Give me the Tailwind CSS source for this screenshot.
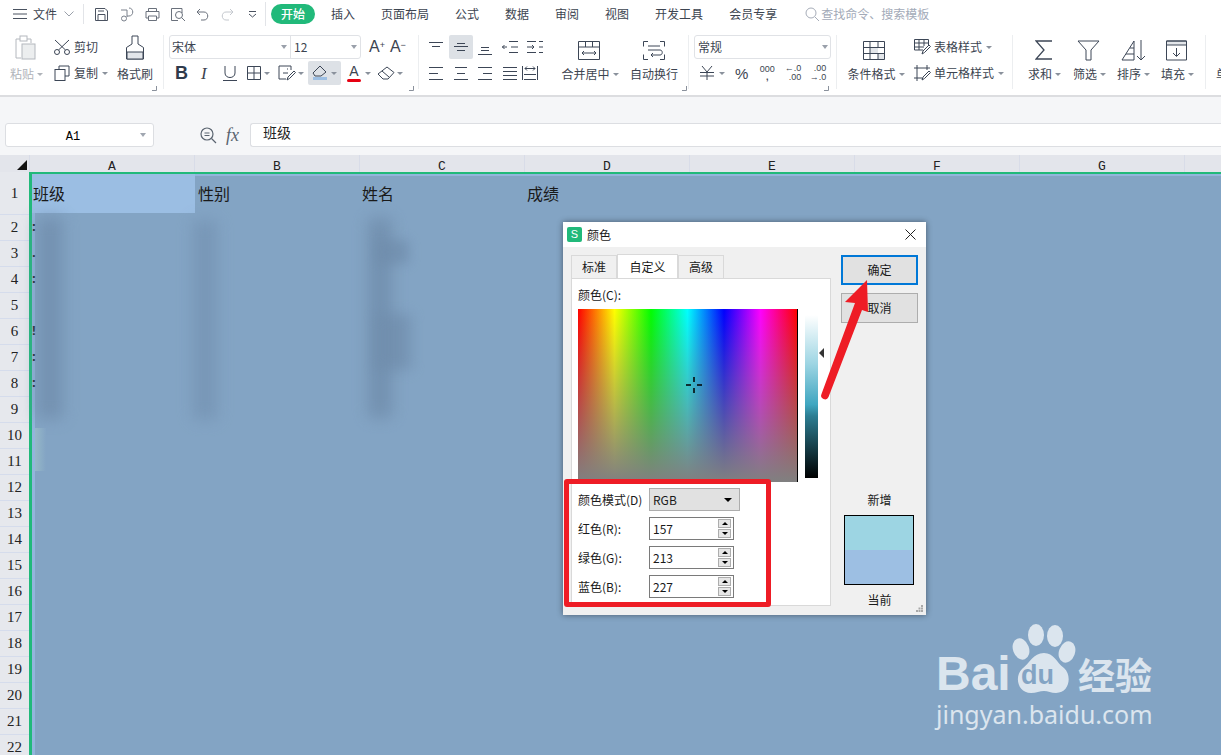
<!DOCTYPE html>
<html lang="zh">
<head>
  <meta charset="UTF-8">
  <title>WPS 表格 - 颜色</title>
  <script src="https://cdn.jsdelivr.net/npm/@tailwindcss/browser@4"></script>
</head>
<body class="bg-[#f5f6f8] font-['Noto_Sans_CJK_SC',sans-serif] text-xs text-[#3c4450]">
<div class="relative w-[1221px] h-[755px] overflow-hidden flex flex-col">

  <!-- tab row -->
  <div class="h-[28px] shrink-0 bg-white flex items-center">
    <svg class="ml-[13px]" width="14" height="12" fill="none" stroke="#4a5260"><path d="M0 1.5h14M0 6h14M0 10.500h14"/></svg>
    <span class="ml-[6px]">文件</span>
    <svg class="ml-[7px]" width="10" height="6" fill="none" stroke="#9aa0aa"><path d="M.5.5 5 5 9.500.5"/></svg>
    <div class="ml-[9px] w-px h-[20px] bg-[#e2e4e8]"></div>
    <svg class="ml-[10px]" width="15" height="15" fill="none" stroke="#4a5260"><path d="M1.500 1.500h9.500l2.500 2.500v9.500H1.500zM4 13.500v-6h7v6M4 4h6"/></svg>
    <svg class="ml-[11px]" width="15" height="15" fill="none" stroke="#7a818c"><path d="M1 3h6M9 1c5 0 5 8 0 8H7M7 3v7"/><circle cx="4" cy="11.500" r="2.500"/></svg>
    <svg class="ml-[10px]" width="15" height="15" fill="none" stroke="#6a717c"><path d="M3.500 4V1.500h8V4M3.500 11H1V4.500h13V11h-2.500M3.500 9h8v4.500h-8z"/></svg>
    <svg class="ml-[10px]" width="16" height="15" fill="none" stroke="#6a717c"><path d="M12 6V1.500H1.500v12H8"/><circle cx="9" cy="8" r="3.500"/><path d="m11.500 10.500 3.500 3.500"/></svg>
    <svg class="ml-[10px]" width="13" height="13" fill="none" stroke="#6a717c"><path d="M4 1 1 4l3 3M1 4h7c5 0 5 8 0 8H5"/></svg>
    <svg class="ml-[12px]" width="13" height="13" fill="none" stroke="#c4c8ce"><path d="m9 1 3 3-3 3M12 4H5c-5 0-5 8 0 8h3"/></svg>
    <svg class="ml-[14px]" width="9" height="9" fill="none" stroke="#4a5260"><path d="M1 1.500h7M1 4l3.500 3L8 4"/></svg>
    <div class="ml-[8px] w-px h-[24px] bg-[#e2e4e8]"></div>
    <div class="ml-[5px] w-[44px] h-[20px] rounded-full bg-[#21b97a] text-white flex items-center justify-center font-medium">开始</div>
    <div class="ml-[16px] flex gap-[26px]">
      <span>插入</span><span>页面布局</span><span>公式</span><span>数据</span><span>审阅</span><span>视图</span><span>开发工具</span><span>会员专享</span>
    </div>
    <svg class="ml-[28px]" width="14" height="14" fill="none" stroke="#a6acb8"><circle cx="6" cy="6" r="5"/><path d="m10 10 4 4"/></svg>
    <span class="ml-[2px] text-[#a3aab8]">查找命令、搜索模板</span>
  </div>

  <!-- ribbon -->
  <div class="h-[69px] shrink-0 bg-white border-b-2 border-[#dcdde0] flex pt-[7px] whitespace-nowrap overflow-hidden">

    <!-- clipboard -->
    <div class="relative w-[164px] shrink-0 h-[54px] flex border-r border-[#eceef0] pl-[10px] box-border">
      <div class="w-[36px] flex flex-col">
        <div class="h-[31px] pl-[5px]">
          <svg width="22" height="26" fill="none" stroke="#b4b8be"><path d="M5 4H1v19h5M12 4h4v4"/><rect x="5" y="1" width="7" height="5" fill="#fff"/><rect x="7" y="9" width="13" height="15" fill="#eceeef"/></svg>
        </div>
        <div class="h-4 flex items-center text-[#b0b4ba]">粘贴<i class="w-0 h-0 ml-[3px] border-x-[3px] border-x-transparent border-t-[3px] border-t-[#b0b4ba]"></i></div>
      </div>
      <div class="ml-[8px] w-[60px] flex flex-col gap-[2px]">
        <div class="h-6 flex items-center">
          <svg width="16" height="16" fill="none" stroke="#3c4656"><circle cx="3" cy="13" r="2.500"/><circle cx="13" cy="13" r="2.500"/><path d="M1 1 11.500 11M15 1 4.500 11"/></svg>
          <span class="ml-[4px]">剪切</span>
        </div>
        <div class="h-6 flex items-center">
          <svg width="16" height="16" fill="none" stroke="#3c4656"><path d="M5 4V1h10v10h-4"/><rect x="1" y="4.500" width="10" height="11"/></svg>
          <span class="ml-[4px]">复制</span><i class="w-0 h-0 ml-[4px] border-x-[3px] border-x-transparent border-t-[3px] border-t-[#8a919c]"></i>
        </div>
      </div>
      <div class="ml-[3px] w-[36px] flex flex-col items-center">
        <div class="h-[31px]">
          <svg width="20" height="25" fill="none" stroke="#3c4656"><path d="M7 1h6v8l5.500 3.500V24H1.500V12.500L7 9z"/><path d="M2 17h16v7H2z" fill="#e3e6ea"/></svg>
        </div>
        <div class="h-4 flex items-center">格式刷</div>
      </div>
      <svg class="absolute left-[152px] top-[51px]" width="5" height="5" fill="none" stroke="#8a919c"><path d="M4.500 0v4.500H0"/></svg>
    </div>

    <!-- font -->
    <div class="relative w-[255px] shrink-0 h-[54px] flex flex-col gap-[2px] border-r border-[#eceef0] pl-[5px] box-border">
      <div class="h-6 flex items-center">
        <div class="w-[192px] h-6 border border-[#e0e2e6] rounded-[3px] flex items-center">
          <div class="w-[121px] h-full flex items-center justify-between pl-[2px] pr-[3px] border-r border-[#e0e2e6]">宋体<i class="w-0 h-0 border-x-[3px] border-x-transparent border-t-[4px] border-t-[#9aa0aa]"></i></div>
          <div class="flex-1 flex items-center justify-between pl-[3px] pr-[3px]">12<i class="w-0 h-0 border-x-[3px] border-x-transparent border-t-[4px] border-t-[#9aa0aa]"></i></div>
        </div>
        <span class="ml-[8px] text-[16px] leading-none font-['Liberation_Sans'] relative">A<sup class="text-[9px]">+</sup></span>
        <span class="ml-[5px] text-[16px] leading-none font-['Liberation_Sans'] relative">A<sup class="text-[9px]">−</sup></span>
      </div>
      <div class="h-6 flex items-center">
        <span class="ml-[6px] w-[14px] text-[18px] font-bold leading-none font-['Liberation_Sans'] text-[#2f3a4c]">B</span>
        <span class="ml-[12px] w-[14px] text-[17px] italic leading-none font-['Liberation_Serif']">I</span>
        <svg class="ml-[8px]" width="14" height="15" fill="none" stroke="#3c4656"><path d="M2 0v7c0 6 10 6 10 0V0M0 14.500h14"/></svg>
        <svg class="ml-[10px]" width="14" height="14" fill="none" stroke="#3c4656"><path d="M.5.500h13v13H.5zM7 0v14M0 7h14"/></svg>
        <i class="w-0 h-0 ml-[3px] border-x-[3px] border-x-transparent border-t-[3px] border-t-[#8a919c]"></i>
        <svg class="ml-[8px]" width="18" height="16" fill="none" stroke="#3c4656"><path d="M13 5V1H1v13h7M9 4h1M5 8h5"/><path d="m9 15 1-3 6-6 1.500 1.500-6 6z"/></svg>
        <i class="w-0 h-0 ml-[2px] border-x-[3px] border-x-transparent border-t-[3px] border-t-[#8a919c]"></i>
        <div class="ml-[4px] w-[33px] h-6 bg-[#dde1e6] rounded-[2px] flex items-center pl-[4px]">
          <svg width="16" height="16" fill="none" stroke="#3c4656"><path d="m8 1 6 6-5 4H3L1 8z"/><path d="M1 13.500h14" stroke="#9dbfe3" stroke-width="3"/></svg>
          <i class="w-0 h-0 ml-[3px] border-x-[3px] border-x-transparent border-t-[3px] border-t-[#8a919c]"></i>
        </div>
        <div class="ml-[6px] w-[14px] h-[18px] flex flex-col items-center">
          <span class="h-[13px] text-[14px] leading-[14px] font-['Liberation_Sans']">A</span>
          <i class="mt-[2px] w-[14px] h-[3px] bg-[#e60012] rounded-full"></i>
        </div>
        <i class="w-0 h-0 ml-[4px] border-x-[3px] border-x-transparent border-t-[3px] border-t-[#8a919c]"></i>
        <svg class="ml-[6px]" width="18" height="14" fill="none" stroke="#3c4656"><path d="M10 1 17 6.500 11 13H6L1 8zM5 5l7 6"/></svg>
        <i class="w-0 h-0 ml-[2px] border-x-[3px] border-x-transparent border-t-[3px] border-t-[#8a919c]"></i>
      </div>
      <svg class="absolute left-[245px] top-[51px]" width="5" height="5" fill="none" stroke="#8a919c"><path d="M4.500 0v4.500H0"/></svg>
    </div>

    <!-- alignment -->
    <div class="relative w-[270px] shrink-0 h-[54px] flex border-r border-[#eceef0] box-border">
      <div class="pl-[5px] w-[131px] flex flex-col gap-[2px]">
        <div class="h-6 flex items-center">
          <div class="w-6 flex justify-center"><svg width="14" height="10" fill="none" stroke="#3c4656"><path d="M0 .5h14M3 4.500h8"/></svg></div>
          <div class="w-6 h-6 ml-px bg-[#dde1e6] rounded-[2px] flex justify-center items-center"><svg width="14" height="8" fill="none" stroke="#3c4656"><path d="M0 3.500h14M3 7.500h8M3 .5h8"/></svg></div>
          <div class="w-6 flex justify-center pt-[8px]"><svg width="14" height="8" fill="none" stroke="#3c4656"><path d="M3 .5h8M3 3.500h8M0 7.500h14"/></svg></div>
          <svg class="ml-[5px]" width="16" height="12" fill="none" stroke="#3c4656"><path d="M7 .5h9M9 6h7M7 11.500h9M5 6H0m2.500-2L.5 6l2 2"/></svg>
          <svg class="ml-[9px]" width="16" height="12" fill="none" stroke="#3c4656"><path d="M0 .5h9M0 11.500h9M7 6h-7M16 .5h-4M16 6h-4M16 11.500h-4M5 4l2 2-2 2"/></svg>
        </div>
        <div class="h-6 flex items-center">
          <div class="w-6 flex justify-center"><svg width="14" height="13" fill="none" stroke="#3c4656"><path d="M0 .5h14M0 6.500h9M0 12.500h14"/></svg></div>
          <div class="w-6 ml-px flex justify-center"><svg width="14" height="13" fill="none" stroke="#3c4656"><path d="M0 12.500h14M3 6.500h8M1 .5h12"/></svg></div>
          <div class="w-6 flex justify-center"><svg width="14" height="13" fill="none" stroke="#3c4656"><path d="M0 .5h14M5 6.500h9M0 12.500h14"/></svg></div>
          <div class="w-6 ml-px flex justify-center"><svg width="14" height="13" fill="none" stroke="#3c4656"><path d="M0 .5h14M0 4.500h14M0 8.500h14M0 12.500h14"/></svg></div>
          <svg class="ml-0" width="16" height="14" fill="none" stroke="#3c4656"><path d="M.5 0v14M15.500 0v14M2 13.500h12M2 8.500h12M3 2.500h10M5 .5l-2 2 2 2M11 .5l2 2-2 2"/></svg>
        </div>
      </div>
      <div class="w-[70px] ml-[4px] flex flex-col items-center">
        <div class="h-[31px] pt-[6px]">
          <svg width="22" height="19" fill="none" stroke="#3c4656"><path d="M.5.5h21v18H.5zM0 6h22M7.500 0v6M14.500 0v6M4 12h14M6 10l-2 2 2 2M16 10l2 2-2 2"/></svg>
        </div>
        <div class="h-4 flex items-center ml-[2px]">合并居中<i class="w-0 h-0 ml-[3px] border-x-[3px] border-x-transparent border-t-[3px] border-t-[#8a919c]"></i></div>
      </div>
      <div class="w-[60px] flex flex-col items-center">
        <div class="h-[31px] pt-[6px]">
          <svg width="22" height="19" fill="none" stroke="#3c4656"><path d="M5 .5H.5v5M17 .5h4.500v5M5 18.500H.5v-5M17 18.500h4.500v-5M5 5h12M5 9h12c3 0 3 5 0 5H8M10 12l-2 2 2 2"/></svg>
        </div>
        <div class="h-4 flex items-center">自动换行</div>
      </div>
      <svg class="absolute left-[263px] top-[51px]" width="5" height="5" fill="none" stroke="#8a919c"><path d="M4.500 0v4.500H0"/></svg>
    </div>

    <!-- number -->
    <div class="relative w-[148px] shrink-0 h-[54px] flex flex-col gap-[2px] border-r border-[#eceef0] pl-[5px] box-border">
      <div class="w-[137px] h-6 border border-[#e0e2e6] rounded-[3px] flex items-center justify-between pl-[3px] pr-[2px]">常规<i class="w-0 h-0 border-x-[3px] border-x-transparent border-t-[4px] border-t-[#9aa0aa]"></i></div>
      <div class="h-6 flex items-center font-['Liberation_Sans']">
        <svg class="ml-[6px]" width="14" height="14" fill="none" stroke="#3c4656"><path d="M2 0l5 6 5-6M0 6.500h14M0 10h14M7 6v8"/></svg>
        <i class="w-0 h-0 ml-[5px] border-x-[3px] border-x-transparent border-t-[3px] border-t-[#8a919c]"></i>
        <span class="ml-[10px] text-[15px] leading-none">%</span>
        <div class="ml-[10px] w-[18px] flex flex-col items-center text-[9px] leading-[8px]"><span>000</span><span class="font-bold">,</span></div>
        <div class="ml-[8px] w-[17px] flex flex-col items-end text-[9px] leading-[9px]"><span>←.0</span><span>.00</span></div>
        <div class="ml-[8px] w-[17px] flex flex-col items-end text-[9px] leading-[9px]"><span>.00</span><span>→.0</span></div>
      </div>
      <svg class="absolute left-[135px] top-[51px]" width="5" height="5" fill="none" stroke="#8a919c"><path d="M4.500 0v4.500H0"/></svg>
    </div>

    <!-- styles -->
    <div class="w-[176px] shrink-0 h-[54px] flex border-r border-[#eceef0] box-border pl-[10px]">
      <div class="w-[58px] flex flex-col items-center">
        <div class="h-[31px] pt-[6px] -ml-[4px]">
          <svg width="22" height="19" fill="none" stroke="#3c4656"><path d="M7 7h8v6H7zM15 13h6.500v5.500H15z" fill="#e3e6ea" stroke="none"/><path d="M.5.500h21v18H.5zM0 6.500h22M0 12.500h22M7 0v19M15 0v6M15 13v6"/></svg>
        </div>
        <div class="h-4 flex items-center">条件格式<i class="w-0 h-0 ml-[3px] border-x-[3px] border-x-transparent border-t-[3px] border-t-[#8a919c]"></i></div>
      </div>
      <div class="ml-[9px] flex flex-col gap-[2px]">
        <div class="h-6 flex items-center">
          <svg width="17" height="16" fill="none" stroke="#3c4656"><path d="M9 11H.5V.500h14V6M0 4h15M0 8h10M5 0v11M10 0v7M8 15l1-3 6-6 1.500 1.500-6 6z"/></svg>
          <span class="ml-[3px]">表格样式</span><i class="w-0 h-0 ml-[4px] border-x-[3px] border-x-transparent border-t-[3px] border-t-[#8a919c]"></i>
        </div>
        <div class="h-6 flex items-center">
          <svg width="17" height="16" fill="none" stroke="#3c4656"><path d="M3 0v16M13 0v5M0 3h16M0 13h8M8 15l1-3 6-6 1.500 1.500-6 6z"/></svg>
          <span class="ml-[3px]">单元格样式</span><i class="w-0 h-0 ml-[4px] border-x-[3px] border-x-transparent border-t-[3px] border-t-[#8a919c]"></i>
        </div>
      </div>
    </div>

    <!-- editing -->
    <div class="w-[193px] shrink-0 h-[54px] flex border-r border-[#eceef0] box-border pl-[15px]">
      <div class="w-[45px] flex flex-col">
        <div class="h-[31px] pt-[5px] pl-[7px]"><svg width="18" height="20" fill="none" stroke="#3c4656" stroke-width="1.300"><path d="M17 1H1l8 9-8 9h16"/></svg></div>
        <div class="h-4 flex items-center">求和<i class="w-0 h-0 ml-[3px] border-x-[3px] border-x-transparent border-t-[3px] border-t-[#8a919c]"></i></div>
      </div>
      <div class="w-[44px] flex flex-col">
        <div class="h-[31px] pt-[5px] pl-[4px]"><svg width="23" height="21" fill="none" stroke="#3c4656"><path d="M1 1h21l-8 9v10H9V10z"/></svg></div>
        <div class="h-4 flex items-center">筛选<i class="w-0 h-0 ml-[3px] border-x-[3px] border-x-transparent border-t-[3px] border-t-[#8a919c]"></i></div>
      </div>
      <div class="w-[44px] flex flex-col">
        <div class="h-[31px] pt-[5px] pl-[4px]"><svg width="25" height="21" fill="none" stroke="#3c4656"><path d="M1 20 13 1v19zM5 14h8M9 8h4M20 0v20M16 16l4 4 4-4"/></svg></div>
        <div class="h-4 flex items-center">排序<i class="w-0 h-0 ml-[3px] border-x-[3px] border-x-transparent border-t-[3px] border-t-[#8a919c]"></i></div>
      </div>
      <div class="w-[40px] flex flex-col">
        <div class="h-[31px] pt-[5px] pl-[5px]"><svg width="21" height="21" fill="none" stroke="#3c4656"><path d="M.5 5h20V1H.5z" fill="#e3e6ea"/><path d="M.5 1h20v19H.5zM10.500 8v8M7 13l3.500 3.500L14 13"/></svg></div>
        <div class="h-4 flex items-center">填充<i class="w-0 h-0 ml-[3px] border-x-[3px] border-x-transparent border-t-[3px] border-t-[#8a919c]"></i></div>
      </div>
    </div>
    <div class="pl-[10px] pt-[31px] h-[54px] shrink-0">单</div>
  </div>

  <!-- formula bar -->
  <div class="h-[58px] shrink-0 flex items-end pb-[8px] pl-[5px]">
    <div class="w-[149px] h-6 bg-white border border-[#dcdee2] rounded-[3px] flex items-center pr-[3px]">
      <span class="w-[134px] text-center pt-[3px] font-['Liberation_Mono'] text-black">A1</span>
      <i class="w-0 h-0 border-x-[3px] border-x-transparent border-t-[4px] border-t-[#a0a6b0]"></i>
    </div>
    <div class="ml-[46px] h-6 flex items-center">
      <svg width="17" height="17" fill="none" stroke="#5a6470" stroke-width="1.200"><circle cx="7" cy="7" r="6"/><path d="M4.500 6h5M4.500 8.500h5M11.500 11.500 16 16"/></svg>
    </div>
    <span class="ml-[9px] h-6 w-[24px] flex items-center font-['Liberation_Serif'] italic text-[18px] text-[#5a6470]">fx</span>
    <div class="flex-1 h-6 bg-white border border-[#dcdee2] border-r-0 rounded-l-[3px] pl-[12px] flex items-center pb-[5px] text-[14px] text-[#222]">班级</div>
  </div>

  <!-- column headers -->
  <div class="h-[17px] shrink-0 bg-[#e3e5eb] flex font-['Liberation_Mono'] text-[13px] text-[#222] leading-[23px]">
    <div class="w-[30px] relative border-r border-[#d8dce8]">
      <svg class="absolute left-[17px] top-[5px]" width="10" height="10"><path d="M10 0v10H0z" fill="#111"/></svg>
    </div>
    <div class="w-[165px] text-center border-r border-[#d8dce8]">A</div>
    <div class="w-[165px] text-center border-r border-[#d8dce8]">B</div>
    <div class="w-[165px] text-center border-r border-[#d8dce8]">C</div>
    <div class="w-[165px] text-center border-r border-[#d8dce8]">D</div>
    <div class="w-[165px] text-center border-r border-[#d8dce8]">E</div>
    <div class="w-[165px] text-center border-r border-[#d8dce8]">F</div>
    <div class="w-[165px] text-center border-r border-[#d8dce8]">G</div>
    <div class="flex-1"></div>
  </div>

  <!-- sheet -->
  <div class="flex-1 flex min-h-0">
    <div id="rowHeads" class="w-[29px] shrink-0 bg-[#e6e8ed] text-[#222] font-['Liberation_Serif'] text-[15px]"></div>
    <div class="relative flex-1 bg-[#83a4c4] border-l-[3px] border-t-2 border-[#21b97a] text-[16px] text-[#1a1a1a] shadow-[inset_3px_2px_0_#93b5dc]">
      <div class="h-[41px] flex items-start">
        <div class="w-[163px] h-[39px] bg-[#9bbee3] flex items-center pl-px">班级</div>
        <div class="w-[165px] h-[39px] flex items-center pl-[3px]">性别</div>
        <div class="w-[165px] h-[39px] flex items-center pl-[2px]">姓名</div>
        <div class="w-[165px] h-[39px] flex items-center pl-[2px]">成绩</div>
      </div>
      <div class="-ml-[2px] font-['Liberation_Mono'] text-[13px] font-bold">
        <div class="h-[26px] leading-[26px]">:</div>
        <div class="h-[26px] leading-[26px]">.</div>
        <div class="h-[26px] leading-[26px]">:</div>
        <div class="h-[26px] leading-[26px]"></div>
        <div class="h-[26px] leading-[26px]">!</div>
        <div class="h-[26px] leading-[26px]">:</div>
        <div class="h-[26px] leading-[26px]">:</div>
      </div>
      <!-- blurred out data -->
      <div class="absolute left-[5px] top-[43px] w-[26px] h-[202px] bg-[#6f8cab] blur-[8px] opacity-75"></div>
      <div class="absolute left-[3px] top-[254px] w-[11px] h-[43px] bg-linear-to-r from-[#96b8c8] to-[#83a4c4]"></div>
      <div class="absolute left-[161px] top-[46px] w-[24px] h-[200px] bg-[#7391b1] blur-[8px] opacity-70"></div>
      <div class="absolute left-[336px] top-[44px] w-[24px] h-[200px] bg-[#6f8cab] blur-[8px] opacity-80"></div>
      <div class="absolute left-[345px] top-[66px] w-[32px] h-[24px] bg-[#6f8cab] blur-[6px] opacity-70"></div>
      <div class="absolute left-[345px] top-[140px] w-[34px] h-[56px] bg-[#6f8cab] blur-[7px] opacity-70"></div>
    </div>
  </div>

  <!-- baidu watermark -->
  <div class="absolute left-[936px] top-[622px] w-[225px] h-[112px] text-[#dbe5ee]">
    <span class="absolute left-0 top-[25px] text-[48px] leading-[54px] font-bold font-['Liberation_Sans']">Bai</span>
    <svg class="absolute left-[74px] top-0" width="66" height="72" fill="#dbe5ee">
      <ellipse cx="26" cy="13" rx="8" ry="11"/><ellipse cx="45" cy="14" rx="8" ry="11"/><ellipse cx="11" cy="27" rx="8" ry="11" transform="rotate(-20 11 27)"/><ellipse cx="57" cy="30" rx="8" ry="11" transform="rotate(20 57 30)"/>
      <path d="M34 31c10 0 12 9 20 15 8 7 6 25-8 25-5 0-8-2-12-2s-8 2-13 2C8 71 4 55 12 47c8-6 11-16 22-16z"/>
    </svg>
    <span class="absolute left-[85px] top-[38px] text-[27px] leading-[30px] font-bold font-['Liberation_Sans'] text-[#83a4c4]">du</span>
    <span class="absolute left-[142px] top-[32px] text-[37px] leading-[40px] font-bold">经验</span>
    <span class="absolute left-0 top-[77px] text-[25px] leading-[30px] font-['Noto_Sans']">jingyan.baidu.com</span>
  </div>

  <!-- colour dialog -->
  <div class="absolute left-[563px] top-[222px] w-[363px] h-[393px] bg-[#f0f0f0] shadow-[0_0_6px_rgba(0,0,0,0.45)] text-[#1a1a1a]">
    <div class="h-[25px] bg-white flex items-center pl-[4px] pr-[10px]">
      <div class="w-[15px] h-[15px] bg-[#21b97a] rounded-[2px] text-white text-[11px] leading-[15px] text-center font-['Liberation_Sans']">S</div>
      <span class="ml-[5px] flex-1">颜色</span>
      <svg width="11" height="11" fill="none" stroke="#222"><path d="m.5.5 10 10M10.500.5l-10 10"/></svg>
    </div>
    <div class="flex pl-[8px] pt-[7px]">
      <div class="w-[260px]">
        <div class="h-[24px] flex items-end">
          <div class="w-[46px] h-[23px] bg-[#f0f0f0] border border-b-0 border-[#d9d9d9] flex items-center justify-center">标准</div>
          <div class="w-[61px] h-[24px] bg-white border border-b-0 border-[#d9d9d9] flex items-center justify-center">自定义</div>
          <div class="w-[46px] h-[23px] bg-[#f0f0f0] border border-b-0 border-[#d9d9d9] flex items-center justify-center">高级</div>
        </div>
        <div class="h-[328px] bg-white border border-[#d9d9d9] pl-[6px] pt-[8px]">
          <div class="h-4 leading-4">颜色(C):</div>
          <div class="mt-[6px] flex">
            <div class="relative w-[220px] h-[173px] border-r border-black bg-[linear-gradient(to_bottom,transparent,#808080),linear-gradient(to_right,#f00,#ff0,#0f0,#0ff,#00f,#f0f,#f00)]">
              <svg class="absolute left-[107px] top-[67px]" width="18" height="18" stroke="#000" stroke-width="1.500"><path d="M9 1v5M9 12v5M1 9h5M12 9h5"/></svg>
            </div>
            <div class="relative ml-[7px] mt-[6px] w-[13px] h-[163px] bg-[linear-gradient(to_bottom,#fff,#9dd5e3_30%,#3fa6c0_55%,#2c7d92_62%,#000)]">
              <i class="absolute left-[14px] top-[33px] w-0 h-0 border-y-[5px] border-y-transparent border-r-[5px] border-r-[#333]"></i>
            </div>
          </div>
          <div class="mt-[6px] flex flex-col gap-[6px] font-['Noto_Sans_CJK_SC']">
            <div class="h-[23px] flex items-center">
              <span class="w-[71px] whitespace-nowrap">颜色模式(D)</span>
              <div class="w-[91px] h-[23px] bg-[#e1e1e1] border border-[#adadad] flex items-center justify-between pl-[3px] pr-[7px]">RGB<i class="w-0 h-0 border-x-[4px] border-x-transparent border-t-[4px] border-t-black"></i></div>
            </div>
            <div class="h-[23px] flex items-center">
              <span class="w-[71px]">红色(R):</span>
              <div class="w-[85px] h-[23px] border border-[#7a7a7a] flex items-center justify-between pl-[3px] pr-[2px]">157
                <div class="flex flex-col gap-px">
                  <div class="w-[13px] h-[9px] bg-[#e6e6e6] border border-[#adadad] flex items-center justify-center"><i class="w-0 h-0 border-x-[3px] border-x-transparent border-b-[3px] border-b-black"></i></div>
                  <div class="w-[13px] h-[9px] bg-[#e6e6e6] border border-[#adadad] flex items-center justify-center"><i class="w-0 h-0 border-x-[3px] border-x-transparent border-t-[3px] border-t-black"></i></div>
                </div>
              </div>
            </div>
            <div class="h-[23px] flex items-center">
              <span class="w-[71px]">绿色(G):</span>
              <div class="w-[85px] h-[23px] border border-[#7a7a7a] flex items-center justify-between pl-[3px] pr-[2px]">213
                <div class="flex flex-col gap-px">
                  <div class="w-[13px] h-[9px] bg-[#e6e6e6] border border-[#adadad] flex items-center justify-center"><i class="w-0 h-0 border-x-[3px] border-x-transparent border-b-[3px] border-b-black"></i></div>
                  <div class="w-[13px] h-[9px] bg-[#e6e6e6] border border-[#adadad] flex items-center justify-center"><i class="w-0 h-0 border-x-[3px] border-x-transparent border-t-[3px] border-t-black"></i></div>
                </div>
              </div>
            </div>
            <div class="h-[23px] flex items-center">
              <span class="w-[71px]">蓝色(B):</span>
              <div class="w-[85px] h-[23px] border border-[#7a7a7a] flex items-center justify-between pl-[3px] pr-[2px]">227
                <div class="flex flex-col gap-px">
                  <div class="w-[13px] h-[9px] bg-[#e6e6e6] border border-[#adadad] flex items-center justify-center"><i class="w-0 h-0 border-x-[3px] border-x-transparent border-b-[3px] border-b-black"></i></div>
                  <div class="w-[13px] h-[9px] bg-[#e6e6e6] border border-[#adadad] flex items-center justify-center"><i class="w-0 h-0 border-x-[3px] border-x-transparent border-t-[3px] border-t-black"></i></div>
                </div>
              </div>
            </div>
          </div>
        </div>
      </div>
      <div class="ml-[10px] w-[77px] pt-px flex flex-col items-center">
        <div class="w-[77px] h-[30px] bg-[#e1e1e1] border-2 border-[#0078d7] flex items-center justify-center">确定</div>
        <div class="mt-[8px] w-[77px] h-[30px] bg-[#e1e1e1] border border-[#adadad] flex items-center justify-center">取消</div>
        <div class="mt-[169px] h-4 leading-4">新增</div>
        <div class="mt-[7px] self-start ml-[3px] w-[70px] h-[70px] border border-black flex flex-col">
          <div class="flex-1 bg-[#9dd5e3]"></div>
          <div class="flex-1 bg-[#9dbfe3]"></div>
        </div>
        <div class="mt-[7px] h-4 leading-4">当前</div>
      </div>
    </div>
    <svg class="absolute right-[3px] bottom-[3px]" width="7" height="7" fill="#a8a8a8"><path d="M5 0h2v2H5zM2.500 2.500h2v2h-2zM5 2.500h2v2H5zM0 5h2v2H0zM2.500 5h2v2h-2zM5 5h2v2H5z"/></svg>
  </div>

  <!-- red annotations -->
  <div class="absolute left-[564px] top-[479px] w-[207px] h-[128px] border-[5px] border-[#ee1c25] rounded-[3px]"></div>
  <svg class="absolute left-[815px] top-[270px]" width="65" height="135" fill="#ee1c25">
    <path d="M52 10 30 32l10 1L6.500 124a3.500 3.500 0 0 0 7 3L47 40l6 2z"/>
  </svg>
</div>

<script>
  // row numbers, row 1 is taller than the rest
  const heads = document.getElementById("rowHeads");
  let html = '';
  for (let i = 1; i <= 22; i++) {
    const cls = i === 1 ? 'h-[43px]' : 'h-[26px]';
    html += `<div class="${cls} pt-px flex items-center justify-center border-b border-[#d5dcec]">${i}</div>`;
  }
  heads.innerHTML = html;
</script>
</body>
</html>
